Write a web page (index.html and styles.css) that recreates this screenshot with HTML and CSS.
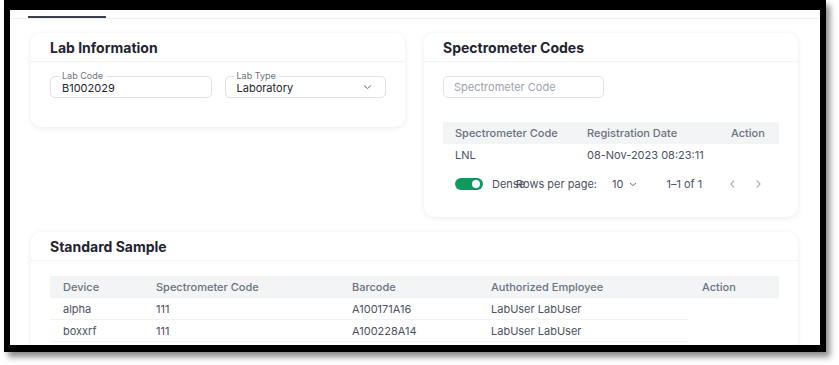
FILE: index.html
```html
<!DOCTYPE html>
<html lang="en">
<head>
  <meta charset="UTF-8">
  <meta name="viewport" content="width=device-width, initial-scale=1.0">
  <title>Lab Details</title>
  <link rel="stylesheet" href="styles.css">
</head>
<body>
  <div class="frame">
    <div class="screen">
      <div class="tabs">
        <div class="tab-indicator"></div>
      </div>

      <div class="cards">
        <div class="card">
          <div class="card-header">Lab Information</div>
          <div class="card-body fields">
            <div class="field">
              <span class="field-label">Lab Code</span>
              <span class="field-value">B1002029</span>
            </div>
            <div class="field">
              <span class="field-label">Lab Type</span>
              <span class="field-value">Laboratory</span>
              <svg class="chevron" width="9" height="6" viewBox="0 0 9 6"><path d="M1 1.5l3.5 3 3.5-3" fill="none" stroke="#6b7280" stroke-width="1"/></svg>
            </div>
          </div>
        </div>

        <div class="card">
          <div class="card-header">Spectrometer Codes</div>
          <div class="card-body">
            <div class="search">Spectrometer Code</div>
            <table class="grid spectro">
              <thead>
                <tr><th>Spectrometer Code</th><th>Registration Date</th><th>Action</th></tr>
              </thead>
              <tbody>
                <tr><td>LNL</td><td>08-Nov-2023 08:23:11</td><td></td></tr>
              </tbody>
            </table>
            <div class="table-footer">
              <span class="switch"><span class="knob"></span></span>
              <span class="dense">Dense</span>
              <span class="rows-label">Rows per page:</span>
              <span class="rows-select">10
                <svg width="8" height="5" viewBox="0 0 8 5"><path d="M1 1l3 2.5 3-2.5" fill="none" stroke="#6b7280" stroke-width="1"/></svg>
              </span>
              <span class="range">1–1 of 1</span>
              <span class="pager">
                <svg width="7" height="10" viewBox="0 0 7 10"><path d="M5 1.5L2 5l3 3.5" fill="none" stroke="#9ca3af" stroke-width="1.1"/></svg>
                <svg width="7" height="10" viewBox="0 0 7 10"><path d="M2 1.5L5 5 2 8.5" fill="none" stroke="#9ca3af" stroke-width="1.1"/></svg>
              </span>
            </div>
          </div>
        </div>

        <div class="card wide">
          <div class="card-header">Standard Sample</div>
          <div class="card-body samples-body">
            <table class="grid samples">
              <thead>
                <tr><th>Device</th><th>Spectrometer Code</th><th>Barcode</th><th>Authorized Employee</th><th>Action</th></tr>
              </thead>
              <tbody>
                <tr><td>alpha</td><td>111</td><td>A100171A16</td><td>LabUser LabUser</td><td></td></tr>
                <tr><td>boxxrf</td><td>111</td><td>A100228A14</td><td>LabUser LabUser</td><td></td></tr>
              </tbody>
            </table>
          </div>
        </div>
      </div>
    </div>
  </div>
</body>
</html>
```

FILE: styles.css
```css
body {
  margin: 0;
  background-color: white;
  font-family: Inter, 'Noto Sans', sans-serif;
  color: #374151;
  width: 839px;
  height: 365px;
  overflow: hidden;
}
.frame {
  margin-left: 4px;
  width: 810px;
  height: 335px;
  border-style: solid;
  border-color: black;
  border-width: 10px 6px 7px 6px;
  box-shadow: 4px 5px 6px rgba(0,0,0,0.45);
}
.screen {
  width: 810px;
  height: 335px;
  overflow: hidden;
  background-color: white;
}
.tabs {
  height: 8px;
  border-bottom: 1px solid #eeeff1;
  display: flex;
  align-items: flex-end;
  padding-left: 18px;
}
.tab-indicator {
  width: 78px;
  height: 2px;
  background-color: #3b3f4a;
}
.cards {
  display: grid;
  grid-template-columns: 374px 374px;
  column-gap: 19px;
  row-gap: 15px;
  align-items: start;
  padding: 14px 0 0 21px;
}
.card {
  background-color: white;
  border-radius: 10px;
  box-shadow: 0 1px 6px rgba(0,0,0,0.08);
}
.card.wide {
  grid-column: 1 / 3;
}
.card-header {
  height: 29px;
  box-sizing: border-box;
  padding: 6px 19px 0;
  font-size: 14px;
  font-weight: 700;
  color: #1f2430;
  border-bottom: 1px dotted #e8e9ec;
}
.card-body {
  padding: 14px 19px 0;
}
.samples-body {
  padding-top: 15px;
  padding-bottom: 30px;
}
.fields {
  display: flex;
  gap: 13px;
  padding-bottom: 29px;
}
.field {
  position: relative;
  width: 162px;
  height: 22px;
  box-sizing: border-box;
  border: 1px solid #dfe1e5;
  border-radius: 5px;
  padding: 0 11px;
  display: flex;
  align-items: center;
}
.field-label {
  position: absolute;
  top: -6px;
  left: 8px;
  padding: 0 3px;
  background-color: white;
  font-size: 9px;
  line-height: 9px;
  color: #6b7280;
}
.field-value {
  font-size: 11px;
  color: #1f2430;
  padding-top: 1px;
}
.chevron {
  margin-left: auto;
  margin-right: 2px;
}
.search {
  width: 161px;
  height: 22px;
  box-sizing: border-box;
  border: 1px solid #dfe1e5;
  border-radius: 5px;
  padding: 0 10px;
  display: flex;
  align-items: center;
  font-size: 11px;
  color: #9ca3af;
}
.grid {
  width: 100%;
  border-collapse: collapse;
  table-layout: fixed;
  font-size: 11px;
}
.grid th {
  box-sizing: border-box;
  background-color: #f3f4f6;
  color: #6b7280;
  font-weight: 500;
  text-align: left;
  height: 22px;
  padding: 0 0 0 12px;
}
.grid td {
  height: 21px;
  padding: 0 0 0 12px;
  color: #4b5260;
}
.spectro {
  margin-top: 24px;
}
.spectro th:nth-child(1) { width: 132px; }
.spectro th:nth-child(2) { width: 144px; }
.spectro td {
  height: 22px;
}
.samples th:nth-child(1) { width: 93px; }
.samples th:nth-child(2) { width: 196px; }
.samples th:nth-child(3) { width: 139px; }
.samples th:nth-child(4) { width: 211px; }
.samples th {
  padding-left: 13px;
}
.samples td {
  padding-left: 13px;
  border-bottom: 1px solid #f1f2f4;
}
.samples td:last-child {
  border-bottom: none;
}
.table-footer {
  display: flex;
  align-items: center;
  height: 36px;
  padding: 0 0 0 12px;
  font-size: 11px;
  color: #4b5260;
  margin-bottom: 15px;
}
.switch {
  width: 28px;
  height: 12px;
  border-radius: 6px;
  background-color: #0f9a5d;
  position: relative;
}
.knob {
  position: absolute;
  top: 2px;
  right: 3px;
  width: 8px;
  height: 8px;
  border-radius: 50%;
  background-color: white;
}
.dense {
  margin-left: 9px;
}
.rows-label {
  margin-left: -9px;
}
.rows-select {
  margin-left: 15px;
  display: flex;
  align-items: center;
  gap: 6px;
}
.range {
  margin-left: 29px;
}
.pager {
  margin-left: 27px;
  display: flex;
  gap: 19px;
}
```
